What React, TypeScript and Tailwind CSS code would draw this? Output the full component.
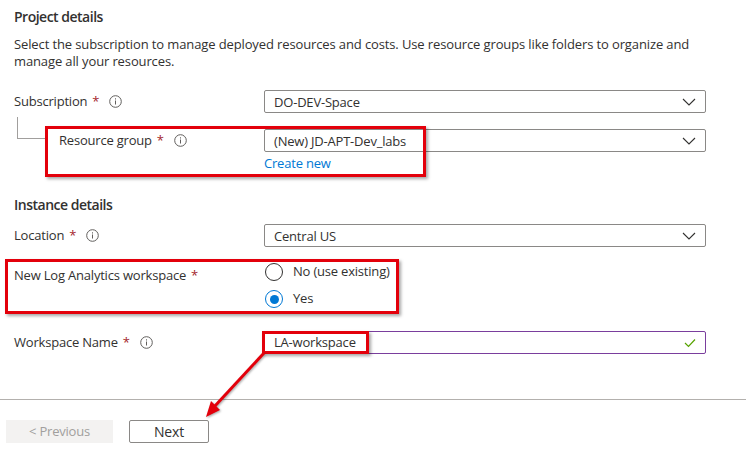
import React from 'react';

const Req = () => <span className="ml-[5px] text-[#a4262c]">*</span>;

const Info = () => (
  <svg width="13" height="13" viewBox="0 0 13 13" className="ml-[10px] shrink-0">
    <circle cx="6.5" cy="6.5" r="5.8" fill="none" stroke="#605e5c" strokeWidth="1" />
    <rect x="6" y="5.5" width="1" height="4" fill="#605e5c" />
    <rect x="6" y="3.3" width="1" height="1.2" fill="#605e5c" />
  </svg>
);

const Chevron = () => (
  <svg width="14" height="8" viewBox="0 0 14 8" className="shrink-0">
    <path d="M1 1 L7 7 L13 1" fill="none" stroke="#323130" strokeWidth="1.1" />
  </svg>
);

const Dropdown = ({ value }: { value: string }) => (
  <div className="flex items-center justify-between h-[23px] px-[9px] border border-[#8a8886] rounded-[2px] bg-white">
    <span className="leading-[20px]">{value}</span>
    <Chevron />
  </div>
);

const Row = ({ label, children, indent }: { label: React.ReactNode; children: React.ReactNode; indent?: boolean }) => (
  <div className="flex">
    <div className={`w-[250px] shrink-0 flex items-start h-[23px] ${indent ? 'pl-[45px]' : ''}`}>
      <div className="flex items-center h-[23px]">{label}</div>
    </div>
    <div className="flex-1">{children}</div>
  </div>
);

const Radio = ({ checked, label }: { checked?: boolean; label: string }) => (
  <div className="flex items-center h-[20px]">
    <div
      className={`w-[18px] h-[18px] rounded-full border flex items-center justify-center ml-[1px] ${
        checked ? 'border-[#0078d4]' : 'border-[#323130]'
      }`}
    >
      {checked && <div className="w-[9px] h-[9px] rounded-full bg-[#0078d4]" />}
    </div>
    <span className="ml-[10px]">{label}</span>
  </div>
);

const Callout = ({ className }: { className: string }) => (
  <div className={`absolute border-[3px] border-[#e3000b] shadow-[2px_2px_3px_rgba(0,0,0,0.35)] pointer-events-none ${className}`} />
);

export default function App() {
  return (
    <div
      className="relative w-[746px] h-[457px] bg-white overflow-hidden flex flex-col text-[13px] tracking-[-0.2px] text-[#323130]"
      style={{ fontFamily: '"Open Sans", "Noto Sans", sans-serif' }}
    >
      <div className="flex-1 pl-[14px] pr-[40px]">
        <h2 className="pt-[7px] text-[14px] leading-[20px] font-semibold tracking-[-0.5px]">Project details</h2>
        <p className="mt-[9px] leading-[17px] tracking-[-0.12px]">
          Select the subscription to manage deployed resources and costs. Use resource groups like folders to organize and
          <br />
          manage all your resources.
        </p>

        <div className="mt-[20px]">
          <Row
            label={
              <>
                <span>Subscription</span>
                <Req />
                <Info />
              </>
            }
          >
            <Dropdown value="DO-DEV-Space" />
          </Row>
        </div>

        <div className="mt-[16px] relative">
          <div className="absolute left-[3px] -top-[12px] w-[28px] h-[22px] border-l border-b border-[#a19f9d]" />
          <Row
            indent
            label={
              <>
                <span>Resource group</span>
                <Req />
                <Info />
              </>
            }
          >
            <Dropdown value="(New) JD-APT-Dev_labs" />
            <div className="mt-[3px] leading-[16px] text-[#0078d4]">Create new</div>
          </Row>
        </div>

        <h2 className="mt-[24px] text-[14px] leading-[20px] font-semibold tracking-[-0.5px]">Instance details</h2>

        <div className="mt-[9px]">
          <Row
            label={
              <>
                <span>Location</span>
                <Req />
                <Info />
              </>
            }
          >
            <Dropdown value="Central US" />
          </Row>
        </div>

        <div className="mt-[15px] flex">
          <div className="w-[250px] shrink-0 pt-[3px] leading-[20px]">
            New Log Analytics workspace
            <Req />
          </div>
          <div className="flex flex-col gap-[7px]">
            <Radio label="No (use existing)" />
            <Radio checked label="Yes" />
          </div>
        </div>

        <div className="mt-[22px]">
          <Row
            label={
              <>
                <span>Workspace Name</span>
                <Req />
                <Info />
              </>
            }
          >
            <div className="flex items-center justify-between h-[23px] px-[9px] border border-[#7a3e9d] rounded-[2px]">
              <span>LA-workspace</span>
              <svg width="12" height="10" viewBox="0 0 12 10">
                <path d="M1 5 L4.5 8.5 L11 1.5" fill="none" stroke="#57a300" strokeWidth="1.2" />
              </svg>
            </div>
          </Row>
        </div>
      </div>

      <div className="h-[58px] border-t border-[#b3b0ad] pt-[20px] pl-[6px] flex gap-[16px] items-start">
        <div className="w-[107px] h-[23px] bg-[#f3f2f1] text-[#a19f9d] flex items-center justify-center">&lt; Previous</div>
        <div className="w-[80px] h-[23px] border border-[#8a8886] rounded-[2px] flex items-center justify-center text-[14px]">
          Next
        </div>
      </div>

      <Callout className="left-[45px] top-[126px] w-[381px] h-[51px]" />
      <Callout className="left-[5px] top-[259px] w-[394px] h-[55px]" />
      <Callout className="left-[262px] top-[331px] w-[107px] h-[23px]" />

      <svg className="absolute inset-0 pointer-events-none" width="746" height="457" viewBox="0 0 746 457">
        <g style={{ filter: 'drop-shadow(1px 1px 1px rgba(0,0,0,0.35))' }}>
          <line x1="264" y1="353" x2="214" y2="407" stroke="#e3000b" strokeWidth="3" />
          <polygon points="206,417 220,410 211,401" fill="#e3000b" />
        </g>
      </svg>
    </div>
  );
}
